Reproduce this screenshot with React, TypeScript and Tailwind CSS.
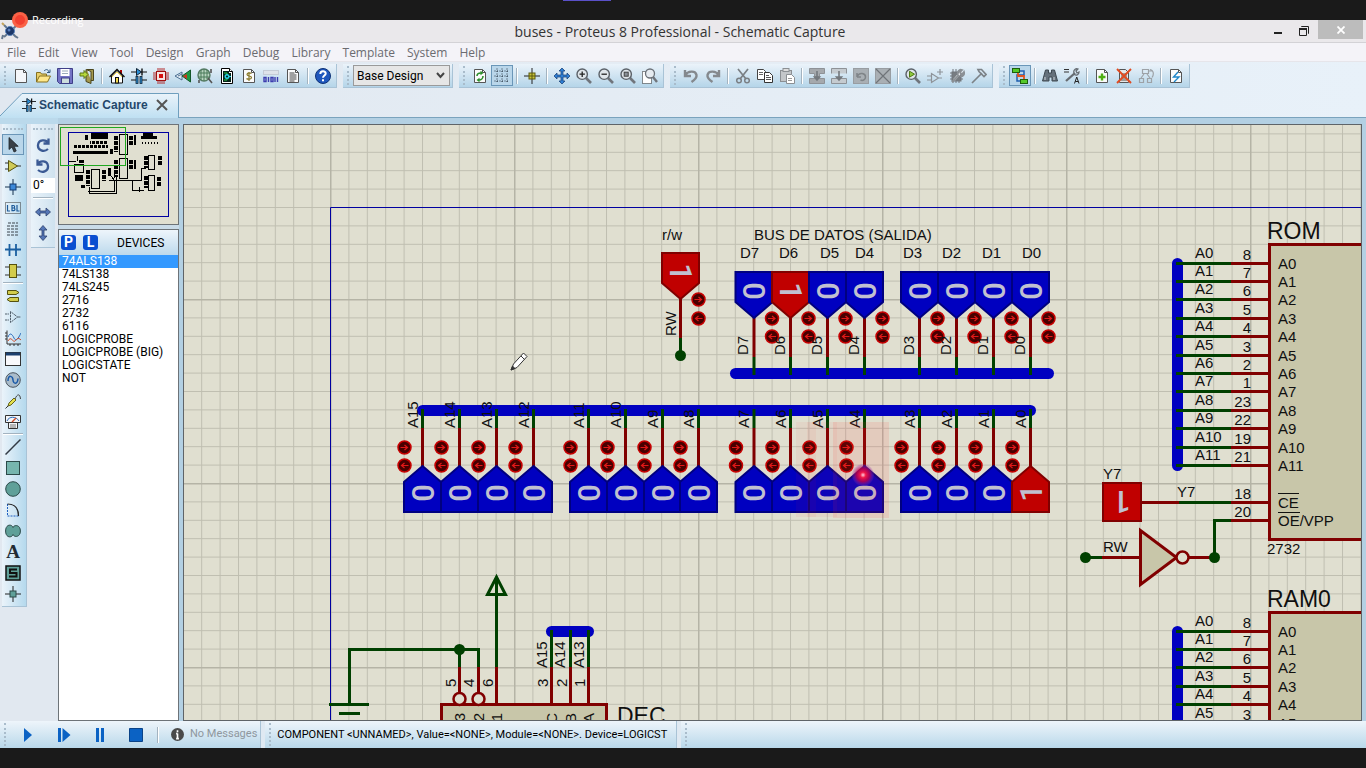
import React from "react";

type Kids = { children?: React.ReactNode };

const Ico = ({ children, s = 18 }: Kids & { s?: number }) => (
  <svg width={s} height={s} viewBox="0 0 16 16" fill="none" stroke="#333" strokeWidth="1" aria-hidden="true" className="shrink-0">
    {children}
  </svg>
);

const PAGE = "M3 1.5h7.5l3 3v10H2.500v-13z";
const page = (fill = "#fbfbfb") => (
  <>
    <path d={PAGE} fill={fill} stroke="#555" />
    <path d="M10.500 1.500v3h3" stroke="#555" />
  </>
);

const wrench = (c: string) => <path d="M3 14l7-7M9 7c-1-3 1-6 4-5l-2 2 1 2 2 0 1-2c1 3-2 5-4 4" stroke={c} strokeWidth="1.8" />;

const lens = (inner: React.ReactNode) => (
  <>
    <path d="M10 10l5 5" stroke="#70757c" strokeWidth="2.600" />
    <circle cx="6.200" cy="6.200" r="5.200" fill="#dfe5ea" stroke="#5b6168" strokeWidth="1.400" />
    {inner}
  </>
);

const block = (inner: React.ReactNode) => (
  <>
    <rect x="0.500" y="0.500" width="15" height="15" fill="#a9afb4" stroke="#989da2" />
    {inner}
  </>
);

const capture = (
  <>
    <path d="M0 4h16" stroke="#111" />
    <path d="M5.500 0.500v7l5-3.500z" fill="#2b8fd6" stroke="#123" />
    <path d="M11 0.500v7" stroke="#111" strokeWidth="1.400" />
    <path d="M0 12h5M11 12h5" stroke="#111" />
    <rect x="5" y="8.500" width="2" height="7" fill="#2b8fd6" stroke="#123" strokeWidth="0.800" />
    <rect x="9" y="8.500" width="2" height="7" fill="#2b8fd6" stroke="#123" strokeWidth="0.800" />
  </>
);

const icons: Record<string, React.ReactNode> = {
  "New Project": page("#f4f6f9"),
  "Open Project": (
    <>
      <path d="M1.500 14V4.500h4l1 1.500h5v2" fill="#e8cf69" stroke="#857020" />
      <path d="M1.500 14l3-6h11l-3 6z" fill="#ffe88a" stroke="#857020" />
      <path d="M9 3c2-2 4-2 5 1M15 1.500v3h-3" stroke="#345a80" />
    </>
  ),
  "Save Project": (
    <>
      <path d="M0.500 0.500h15v15h-13l-2-2z" fill="#7373c4" stroke="#3f3f88" />
      <rect x="3.500" y="1" width="9" height="7" fill="#fff" stroke="none" />
      <path d="M5 3h6M5 5.500h6" stroke="#9ab" />
      <rect x="4.500" y="10" width="8" height="5.500" fill="#cdd" stroke="#3f3f88" />
    </>
  ),
  "Close Project": (
    <>
      <path d="M8 1.500h6.500v11H12M7 1.500v12l5 2v-12z" fill="#a59a4e" stroke="#4b461e" />
      <path d="M1 5h4V2.500l4 4-4 4V8H1z" fill="#b6d83a" stroke="#5c7715" />
    </>
  ),
  Home: (
    <>
      <path d="M12 2v4" stroke="#a00" strokeWidth="2" />
      <path d="M2.500 15V8L8 2.500 13.500 8v7z" fill="#fff" stroke="#111" />
      <path d="M0.500 9L8 1.500 15.500 9" stroke="#111" strokeWidth="1.400" />
      <path d="M3 9l5-5 5 5" stroke="#f2d94c" />
      <rect x="6.500" y="9.500" width="3" height="5.500" fill="#f2d94c" stroke="#111" />
    </>
  ),
  "Schematic Capture": capture,
  "PCB Layout": (
    <>
      <path d="M5 0v16M7 0v16M9 0v16M11 0v16M0 5h16M0 7h16M0 9h16M0 11h16" stroke="#b01818" strokeWidth="0.900" />
      <rect x="3.500" y="3.500" width="9" height="9" fill="#f6e3e3" stroke="#a01010" />
      <rect x="6" y="6" width="4" height="4" fill="#d51010" stroke="none" />
    </>
  ),
  "3D Visualizer": (
    <>
      <path d="M0 8l7-4v8zM3 8l4-2" fill="#dfe9f2" stroke="#4b6f92" />
      <path d="M15.500 2v12L7 8z" fill="#1f9a42" stroke="#14582a" />
      <path d="M12 6v5l-4-3z" fill="#c32" stroke="none" />
    </>
  ),
  "Gerber Viewer": (
    <>
      <circle cx="7" cy="7" r="6" fill="#b9d4c0" stroke="#557a63" strokeWidth="1.400" />
      <path d="M2 5h10M2 9h10M7 1v12M4 2v10M10 2v9" stroke="#4b7a5a" />
      <path d="M11 10l4 5M14 1v4M2 12v3" stroke="#555" strokeWidth="1.600" />
    </>
  ),
  "Design Explorer": (
    <>
      <path d="M2.500 0.500h8l3 3v12h-11z" fill="#fff" stroke="#000" />
      <path d="M4 3h6v2h2v9H4z" fill="#06251c" stroke="none" />
      <path d="M10.500 0.500v3h3" fill="#fff" stroke="#000" />
      <path d="M5 5h3v2M5 12h3v-2" stroke="#2ad04a" />
      <circle cx="8" cy="8.500" r="1.800" stroke="#29d4e5" strokeWidth="1.400" />
      <path d="M10 8.500h2" stroke="#29d4e5" />
    </>
  ),
  "Bill of Materials": (
    <>
      {page()}
      <path d="M10.500 5.500c-1-1-4.500-1-4.500 1s4.500 1 4.500 3-4 2-5 1M8 4v9" stroke="#8a7a2a" strokeWidth="1.200" />
    </>
  ),
  "Source Code": (
    <>
      <rect x="0.500" y="2.500" width="15" height="4" fill="#dfe3ea" stroke="#c5cbd5" />
      <path d="M1 9.500h2v4H1zM5.500 9v5M8 9.500h2v4H8zM12 9v5M14.500 9v5" stroke="#3c3cae" strokeWidth="1.400" />
    </>
  ),
  "Project Notes": (
    <>
      {page()}
      <path d="M4.500 5h5M4.500 7h7M4.500 9h7M4.500 11h7M4.500 13h5" stroke="#444" />
    </>
  ),
  Help: (
    <>
      <circle cx="8" cy="8" r="7.500" fill="#1f57bd" stroke="#0e3276" />
      <path d="M5.300 6c0-3.500 5.400-3.500 5.400-.5 0 2-2.700 2-2.700 4.200M8 11.200v2" stroke="#fff" strokeWidth="2" />
    </>
  ),
  Redraw: (
    <>
      {page()}
      <path d="M5 8c0-2 1.500-3 4-3M11 8c0 2-1.500 4-4 4" stroke="#2c8f2c" strokeWidth="1.600" />
      <path d="M8.500 2.800v4.400l3-2.200zM7.500 9.800v4.400l-3-2.200z" fill="#2c8f2c" stroke="none" />
    </>
  ),
  "Toggle Grid": (
    <path d="M0.500 3h15M0.500 8h15M0.500 13h15M3 0.500v15M8 0.500v15M13 0.500v15" stroke="#243240" strokeDasharray="1 1.500" />
  ),
  "False Origin": (
    <>
      <path d="M0 8h16M8 0v16" stroke="#222" />
      <rect x="5" y="5" width="6" height="6" fill="#c9c438" stroke="#5d5a10" />
      <path d="M5 8h6M8 5v6" stroke="#5d5a10" />
    </>
  ),
  "Centre At Cursor": (
    <path d="M8 0l3 3H9v4h4V5l3 3-3 3V9H9v4h2l-3 3-3-3h2V9H3v2L0 8l3-3v2h4V3H5z" fill="#2f7fd4" stroke="#123a70" strokeWidth="0.700" />
  ),
  "Zoom In": lens(<path d="M3.500 6.200h5.400M6.200 3.500v5.400" stroke="#222" strokeWidth="1.300" />),
  "Zoom Out": lens(<path d="M3.500 6.200h5.400" stroke="#222" strokeWidth="1.300" />),
  "Zoom To View Entire Sheet": lens(<rect x="4.200" y="4.200" width="4" height="4" fill="#8a9097" stroke="#444" />),
  "Zoom To Area": (
    <>
      <rect x="0.500" y="3.500" width="9" height="12" fill="#fff" stroke="#222" strokeDasharray="1 1" />
      <path d="M11 9l4 5" stroke="#70757c" strokeWidth="2.400" />
      <circle cx="8" cy="5.500" r="4.500" fill="#e6ebf0" stroke="#6b7178" strokeWidth="1.300" />
    </>
  ),
  Undo: <path d="M2 2v6h6M2.500 7c2-4 10-5 11 0 .5 3-2 5-5 7" stroke="#84898e" strokeWidth="2.400" />,
  Redo: <path d="M14 2v6H8M13.500 7c-2-4-10-5-11 0-.5 3 2 5 5 7" stroke="#84898e" strokeWidth="2.400" />,
  Cut: (
    <>
      <path d="M3 1l8 10M13 1L5 11" stroke="#7a7f84" strokeWidth="1.700" />
      <circle cx="4" cy="12.500" r="2.300" stroke="#7a7f84" strokeWidth="1.500" />
      <circle cx="12" cy="12.500" r="2.300" stroke="#7a7f84" strokeWidth="1.500" />
    </>
  ),
  Copy: (
    <>
      <path d="M0.500 1.500h6l2 2v8h-8z" fill="#fff" stroke="#444" />
      <path d="M2 4.500h4M2 6.500h4" stroke="#666" />
      <path d="M7.500 4.500h5l3 3v7h-8z" fill="#fff" stroke="#333" />
      <path d="M9 7.500h3M9 9.500h5M9 11.500h5" stroke="#555" />
    </>
  ),
  Paste: (
    <>
      <rect x="1.500" y="2.500" width="11" height="11" fill="#c3c6c9" stroke="#8b8f93" />
      <rect x="4" y="0.500" width="6" height="3" fill="#ddd" stroke="#8b8f93" />
      <path d="M7.500 6.500h5l3 3v6h-8z" fill="#fff" stroke="#8b8f93" />
      <path d="M9 10.500h4M9 12.500h4" stroke="#999" />
    </>
  ),
  "Block Copy": (
    <>
      <path d="M0.500 0.500h15v5h-5v3h-5v-3h-5zM0.500 10.500h15v5H0.500z" fill="#a5a9ad" stroke="#8e9297" />
      <path d="M8 3v6M5.500 9l2.500 3 2.500-3z" fill="#74797e" stroke="#74797e" strokeWidth="1.600" />
    </>
  ),
  "Block Move": (
    <>
      <path d="M0.500 5.500v-5h15v5M0.500 10.500h15v5H0.500z" fill="#c5cbd0" stroke="#8e9297" />
      <path d="M8 3v6M5.500 9l2.500 3 2.500-3z" fill="#74797e" stroke="#74797e" strokeWidth="1.600" />
    </>
  ),
  "Block Rotate": block(<path d="M4 9h4M4 9V5M4.500 8c2-4 8-3 8 1 0 3-3 4-5 3" stroke="#7f8488" strokeWidth="1.500" />),
  "Block Delete": block(<path d="M1 1l14 14M15 1L1 15" stroke="#6f7479" strokeWidth="1.200" />),
  "Pick Parts": lens(<path d="M4.500 3.200v6l5-3z" fill="#8fc93c" stroke="#4e7a17" />),
  "Make Device": <path d="M4.500 5.500v9l7-4.500zM0 8h4.500M0 12h4.500M11.500 10H15M13 1v6M10 4h6" stroke="#8e9399" strokeWidth="1.200" />,
  "Packaging Tool": (
    <>
      <path d="M4 1v14M7 1v14M10 5v10M1 5h13M1 8h13M1 11h13" stroke="#72777c" />
      <rect x="3" y="4" width="9" height="9" fill="#777c81" stroke="#72777c" />
      <path d="M5 12l8-9" stroke="#e8ebee" strokeWidth="2.200" />
      {wrench("#8b9095")}
    </>
  ),
  Decompose: <path d="M1 15L9 7M7 1.500h3.500l4.500 5-2 2-5-5zM9 7l2-2" stroke="#7c8287" strokeWidth="1.700" />,
  "Wire Autorouter": (
    <>
      <path d="M8 3h4v4H5v6h4" stroke="#1f5fae" strokeWidth="1.500" />
      <path d="M6 5v3h6v3" stroke="#e0531f" strokeWidth="1.800" />
      <rect x="0.500" y="0.500" width="7" height="4" fill="#54c92a" stroke="#1e5e0d" />
      <rect x="8.500" y="11.500" width="7" height="4" fill="#54c92a" stroke="#1e5e0d" />
    </>
  ),
  "Search and Tag": (
    <>
      <path d="M3.500 2h3v3h3V2h3l3 11h-5.500V9h-3v4H0.500z" fill="#65717c" stroke="#3e4851" />
      <path d="M3 9v3M12 9v3" stroke="#cfd6dc" />
    </>
  ),
  "Property Assignment": (
    <>
      <path d="M0 1.500h5M0 4h5" stroke="#333" strokeWidth="1.200" />
      <path d="M2 13L11 5" stroke="#666c72" strokeWidth="2.300" />
      <path d="M10 5c-1-3 2-5 4-4l-2 2 1 2 2-1c0 3-3 4-5 2" stroke="#666c72" strokeWidth="1.300" />
      <path d="M10.500 15.500l2.250-6.500 2.250 6.500M11.300 13.500h3" stroke="#222" />
    </>
  ),
  "New Sheet": (
    <>
      {page()}
      <path d="M8 5.500v7M4.500 9h7" stroke="#4faf13" strokeWidth="2.400" />
    </>
  ),
  "Remove Sheet": (
    <>
      <path d="M3.500 1.500h6l3 3v10h-9z" fill="#e7e7e7" stroke="#555" />
      <path d="M5 6h6M5 8h6M5 10h6M5 12h6" stroke="#555" />
      <path d="M1 1l14 14M15 1L1 15" stroke="#e04a20" strokeWidth="1.900" />
    </>
  ),
  "Exit to Parent": (
    <path d="M4.500 1.500h6v4h-6zM1.500 10.500h4v4h-4zM9.500 10.500h4v4h-4zM6 6l-3 4M9 6l3 4M12 1.500c4 1 4 5 2 8M10.500 3h4" stroke="#9da2a7" strokeWidth="1.200" />
  ),
  "Electrical Rules Check": (
    <>
      {page()}
      <path d="M10 4L5.500 9H11l-5 5" stroke="#1d86c9" strokeWidth="1.400" />
    </>
  ),
  "Selection Mode": <path d="M4 0.500v12l3-2.500 2 5 2.200-1-2-4.700h4z" fill="#3a4148" stroke="#20262b" strokeWidth="0.800" />,
  "Component Mode": (
    <>
      <path d="M0 5h4M0 11h4M12 8h4" stroke="#333" />
      <path d="M3.500 2.500v11l9-5.500z" fill="#cfca57" stroke="#55520f" />
    </>
  ),
  "Junction Dot Mode": (
    <>
      <path d="M0 8h16M8 0v16" stroke="#17324f" />
      <rect x="5" y="5" width="6" height="6" fill="#3c88d8" stroke="#123a70" />
    </>
  ),
  "Wire Label Mode": (
    <>
      <rect x="0.500" y="2.500" width="15" height="11" stroke="#333" strokeDasharray="1 1" />
      <path d="M2.500 5v6H5M7 5.500h1.500c1.500 0 1.500 2.500 0 2.500H7h1.700c1.700 0 1.700 2.700 0 2.700H7zM12 5v6h2.500" stroke="#1c5a99" strokeWidth="1.200" />
    </>
  ),
  "Text Script Mode": <path d="M3 2h10M2 5h12M2 8h12M2 11h12M2 14h12" stroke="#3c444c" strokeDasharray="3 1" />,
  "Buses Mode": <path d="M0 7.500h16M4.500 2v5.500M4.500 7.500V14M11 2v5.500M11 7.500V14" stroke="#1b5fa0" strokeWidth="1.800" />,
  "Subcircuit Mode": (
    <>
      <path d="M0 4h16M0 12h16" stroke="#333" />
      <rect x="4.500" y="1.500" width="7" height="13" fill="#d2cc4c" stroke="#55520f" />
    </>
  ),
  "Terminals Mode": (
    <path d="M2.500 2.500h8.500l3 2-3 2H2.500zM13.500 9.500H5l-3 2 3 2h8.500z" fill="#d2cc4c" stroke="#55520f" />
  ),
  "Device Pins Mode": <path d="M5.500 2.500v11l7-5.500zM0 5h4M0 11h4M12.500 8H16" stroke="#52606d" strokeDasharray="2.500 0.600" />,
  "Graph Mode": (
    <>
      <path d="M2 0.500v13.500h14M0 3h2M0 6h2M0 9h2M5 14v2M9 14v2M13 14v2" stroke="#333" />
      <path d="M3 7c2-5 4-3 6 1s4 1 7-5" stroke="#2566b8" />
      <path d="M3 11c3-6 5 2 7 0s3-4 6-1" stroke="#cf4b28" />
    </>
  ),
  "Active Popup Mode": (
    <>
      <rect x="0.500" y="1.500" width="15" height="13" fill="#f8f8fb" stroke="#333" />
      <path d="M1 3h14" stroke="#1b3f6e" strokeWidth="3" />
    </>
  ),
  "Generator Mode": (
    <>
      <circle cx="8" cy="8" r="7.300" fill="#a9bccb" stroke="#4c555e" />
      <path d="M3 9c0-7 4.800-5 5-1s4.500 5 5-1.500" stroke="#1a5aa8" strokeWidth="1.500" />
    </>
  ),
  "Probe Mode": (
    <>
      <path d="M0.500 15.500l3-3" stroke="#333" />
      <path d="M3 13l1-3 5-5 2 2-5 5z" fill="#e4e04d" stroke="#66641b" />
      <path d="M10 6c2-5 5-6 5.500 0" stroke="#444" />
    </>
  ),
  "Instruments Mode": (
    <>
      <path d="M0.500 1.500h15v7H0.500zM3.500 8.500h9v6h-9z" fill="#f3f5f7" stroke="#333" />
      <path d="M2 7c2-5 9-5 12 0" stroke="#2566b8" />
      <path d="M7 8l4-4" stroke="#cf4b28" strokeWidth="1.400" />
      <path d="M5 11h6M5 13h6" stroke="#777" />
    </>
  ),
  "2D Line": <path d="M0.500 15.500l15-15" stroke="#333a44" strokeWidth="1.500" />,
  "2D Box": <rect x="1.500" y="1.500" width="13" height="13" fill="#76b5ae" stroke="#2c4a49" />,
  "2D Circle": <circle cx="8" cy="8" r="7.300" fill="#5fa099" stroke="#2c4a49" />,
  "2D Arc": (
    <>
      <path d="M2.500 2v12h12" stroke="#1f5fc0" strokeDasharray="2 1" />
      <path d="M2.500 2c8 0 11 5 11 12" stroke="#222" strokeWidth="1.200" />
    </>
  ),
  "2D Closed Path": (
    <path d="M8 4.500C7 1 .6 .8 .6 8S7 15 8 11.500c1 3 7.400 3 7.400-3.500S9 1.500 8 4.500z" fill="#5fa099" stroke="#2c4a49" />
  ),
  "2D Symbols": (
    <>
      <rect x="1" y="1" width="14" height="14" fill="#5fa099" stroke="#111" strokeWidth="1.500" />
      <path d="M12 4.500H5v3.500h6.500v3.500H4" stroke="#111" strokeWidth="2" />
    </>
  ),
  "2D Markers": (
    <>
      <path d="M0 8h16M8 0v16" stroke="#222" />
      <rect x="5" y="5" width="6" height="6" fill="#5fa099" stroke="#2c4a49" />
    </>
  ),
  "Rotate Clockwise": <path d="M13.500 1.500v5h-5M13 6C11 2 3.500 2.500 3 8s6 7.500 10 4" stroke="#3b5a94" strokeWidth="2.300" />,
  "Rotate Anti-Clockwise": <path d="M2.500 1.500v5h5M3 6c2-4 9.500-3.500 10 2s-6 7.500-10 4" stroke="#3b5a94" strokeWidth="2.300" />,
  "X-Mirror": <path d="M0.500 8L5 4v3h6V4l4.500 4L11 12V9H5v3z" fill="#5476b6" stroke="#2b3f6c" strokeWidth="0.800" />,
  "Y-Mirror": <path d="M8 0.500L4 5h3v6H4l4 4.500L12 11H9V5h3z" fill="#5476b6" stroke="#2b3f6c" strokeWidth="0.800" />,
};

const Grip = () => <span className="mx-1 my-0.5 w-0.5 self-stretch border-l-2 border-dotted border-[#a9bccb]" />;

const VSep = () => (
  <span className="flex w-2 justify-center">
    <span className="h-4 w-0.5 border-r border-white bg-[#a3b3c0]" />
  </span>
);

const Tool = ({ name, active = false }: { name: string; active?: boolean }) => (
  <button
    type="button"
    aria-label={name}
    className={
      active
        ? "flex h-[21px] w-[22px] items-center justify-center border border-[#6a96b8] bg-[#b9d6ea]"
        : "flex h-[21px] w-[22px] items-center justify-center border border-transparent"
    }
  >
    {name === "2D Text" ? (
      <span className="font-['Liberation_Serif',serif] text-[19px] leading-5 font-bold text-[#222b33]">A</span>
    ) : (
      <Ico s={16}>{icons[name]}</Ico>
    )}
  </button>
);

const Band = ({ children }: Kids) => (
  <div className="flex h-6 items-center border-r border-b border-[#a9c3d6] bg-gradient-to-b from-[#ebf3fa] to-[#b5d5e9] pr-0.5">
    <Grip />
    {children}
  </div>
);

const groups: { names: string[] }[] = [
  { names: ["New Project", "Open Project", "Save Project", "Close Project", "|", "Home", "Schematic Capture", "PCB Layout", "3D Visualizer", "Gerber Viewer", "Design Explorer", "Bill of Materials", "Source Code", "Project Notes", "|", "Help"] },
  { names: ["Redraw", "Toggle Grid", "|", "False Origin", "|", "Centre At Cursor", "Zoom In", "Zoom Out", "Zoom To View Entire Sheet", "Zoom To Area"] },
  { names: ["Undo", "Redo", "|", "Cut", "Copy", "Paste", "|", "Block Copy", "Block Move", "Block Rotate", "Block Delete", "|", "Pick Parts", "Make Device", "Packaging Tool", "Decompose"] },
  { names: ["Wire Autorouter", "|", "Search and Tag", "Property Assignment", "|", "New Sheet", "Remove Sheet", "Exit to Parent", "|", "Electrical Rules Check"] },
];
const pressed = ["Toggle Grid", "Wire Autorouter", "Selection Mode"];

const ToolGroup = ({ names }: { names: string[] }) => (
  <Band>
    {names.map((n, i) => (n === "|" ? <VSep key={i} /> : <Tool key={i} name={n} active={pressed.includes(n)} />))}
  </Band>
);

const modes = [
  "Selection Mode", "Component Mode", "Junction Dot Mode", "Wire Label Mode", "Text Script Mode", "Buses Mode", "Subcircuit Mode", "|",
  "Terminals Mode", "Device Pins Mode", "Graph Mode", "Active Popup Mode", "Generator Mode", "Probe Mode", "Instruments Mode", "|",
  "2D Line", "2D Box", "2D Circle", "2D Arc", "2D Closed Path", "2D Text", "2D Symbols", "2D Markers",
];

const menus = ["File", "Edit", "View", "Tool", "Design", "Graph", "Debug", "Library", "Template", "System", "Help"];
const devices = ["74ALS138", "74LS138", "74LS245", "2716", "2732", "6116", "LOGICPROBE", "LOGICPROBE (BIG)", "LOGICSTATE", "NOT"];

const RED = "#800000";
const GREEN = "#004000";
const BLUE = "#0000c0";

const Line = ({ d, c, w = 3 }: { d: string; c: string; w?: number }) => <path d={d} stroke={c} strokeWidth={w} fill="none" />;

const T = ({ x, y, children, rot = false, end = false, size = 15 }: Kids & { x: number; y: number; rot?: boolean; end?: boolean; size?: number }) => (
  <text x={x} y={y} fontSize={size} textAnchor={end ? "end" : "start"} transform={rot ? `rotate(-90 ${x} ${y})` : undefined}>
    {children}
  </text>
);

const Digit = ({ x, y, v, rot }: { x: number; y: number; v: number; rot: number }) => (
  <text x={0} y={11} fontSize={31} fontFamily="Roboto, sans-serif" fontWeight={500} textAnchor="middle" fill="#c0c0d0" transform={`translate(${x} ${y}) rotate(${rot})`}>
    {v}
  </text>
);

const Toggle = ({ x, y, left = false }: { x: number; y: number; left?: boolean }) => (
  <g>
    <circle cx={x} cy={y} r={6.5} fill="#480000" stroke="#c80000" strokeWidth={1.5} />
    <path d={left ? `M${x + 4} ${y}h-7m3-2.500l-3 2.500 3 2.500` : `M${x - 4} ${y}h7m-3-2.500l3 2.500-3 2.500`} stroke="#e01818" strokeWidth={1.2} fill="none" />
  </g>
);

const Flag = ({ x, tip, down, v }: { x: number; tip: number; down: boolean; v: number }) => {
  const s = down ? -1 : 1;
  return (
    <g>
      <path
        d={`M${x} ${tip}l18.500 ${s * 16}v${s * 30}h-37v${s * -30}z`}
        fill={v ? "#c00000" : BLUE}
        stroke={v ? RED : "#000080"}
        strokeWidth={2}
      />
      <Digit x={x} y={tip + s * 27} v={v} rot={down ? 90 : -90} />
    </g>
  );
};

const dataX = [754, 790.5, 827.5, 864.5, 919.5, 956.5, 993.5, 1030.5];
const dataLabelX = [740, 779, 820, 855, 903, 942, 982, 1022];
const addrX = [422.5, 459.5, 496.5, 533.5, 588.5, 625.5, 662.5, 698.5, ...dataX];
const pinY = [263.5, 281.5, 299.5, 318.5, 336.5, 355.5, 373.5, 391.5, 410.5, 428.5, 447.5, 465.5];
const pinNo = [8, 7, 6, 5, 4, 3, 2, 1, 23, 22, 19, 21];

const Memory = ({ dy, name, part }: { dy: number; name: string; part?: string }) => (
  <g transform={`translate(0 ${dy})`}>
    <rect x={1269.5} y={244.5} width={200} height={295} fill="#c8c6a9" stroke={RED} strokeWidth={3} />
    <T x={1267} y={239} size={23}>{name}</T>
    <path d="M1177.500 263.500V465.500" stroke={BLUE} strokeWidth={11} strokeLinecap="round" />
    {pinY.map((y, i) => (
      <g key={i}>
        <Line d={`M1176 ${y}H1231`} c={GREEN} />
        <Line d={`M1231 ${y}H1269`} c={RED} />
        <T x={1195} y={y - 6}>{`A${i}`}</T>
        <T x={1251} y={y - 4} end>{pinNo[i]}</T>
        <T x={1278} y={y + 5}>{`A${i}`}</T>
      </g>
    ))}
    {part && <T x={1267} y={554}>{part}</T>}
  </g>
);

const Schematic = () => (
  <svg width="100%" height="100%" className="block" fontFamily="'Liberation Sans', Arial, sans-serif" fill="#101010" role="img" aria-label="Schematic sheet">
    <defs>
      <pattern id="minor" width="18.400" height="18.400" patternUnits="userSpaceOnUse" patternTransform="translate(330 115)">
        <path d="M0.500 0V18.400M0 0.500H18.400" stroke="#bfbeb0" strokeWidth="1" />
      </pattern>
      <pattern id="major" width="184" height="184" patternUnits="userSpaceOnUse" patternTransform="translate(330 115)">
        <path d="M0.500 0V184M0 0.500H184" stroke="#b5b4a6" strokeWidth="2" />
      </pattern>
      <radialGradient id="pointer">
        <stop offset="0" stopColor="#ffd0e0" />
        <stop offset="0.250" stopColor="#f01848" />
        <stop offset="0.600" stopColor="#d00040" stopOpacity="0.750" />
        <stop offset="1" stopColor="#8030c0" stopOpacity="0.150" />
      </radialGradient>
    </defs>
    <g transform="translate(-184 -125)">
      <rect x="184" y="125" width="4000" height="3000" fill="url(#minor)" />
      <rect x="184" y="125" width="4000" height="3000" fill="url(#major)" />
      <path d="M330.500 4000V207.500H4000" stroke="#0000a0" fill="none" />

      <T x={662} y={240}>r/w</T>
      <Line d="M680.500 298V338" c={RED} />
      <Line d="M680.500 338V356" c={GREEN} />
      <circle cx={680.5} cy={355.5} r={5.5} fill={GREEN} />
      <Flag x={680.5} tip={299} down v={1} />
      <Toggle x={698.5} y={299.5} />
      <Toggle x={698.5} y={318.5} left />
      <T x={676} y={336} rot>RW</T>

      <T x={754} y={240}>BUS DE DATOS (SALIDA)</T>
      <path d="M735.500 373.500H1048.500" stroke={BLUE} strokeWidth={11} strokeLinecap="round" />
      {dataX.map((x, i) => (
        <g key={i}>
          <T x={dataLabelX[i]} y={258}>{`D${7 - i}`}</T>
          <Line d={`M${x} 317V357`} c={RED} />
          <Line d={`M${x} 357V375`} c={GREEN} />
          <Flag x={x} tip={318} down v={i === 1 ? 1 : 0} />
        </g>
      ))}
      {dataX.map((x, i) => (
        <g key={i}>
          <T x={x - 6} y={355} rot>{`D${7 - i}`}</T>
          <Toggle x={x + 18} y={318.5} />
          <Toggle x={x + 18} y={336.5} left />
        </g>
      ))}

      <path d="M422.500 410.500H1030.500" stroke={BLUE} strokeWidth={11} strokeLinecap="round" />
      {addrX.map((x, i) => (
        <g key={i}>
          <Line d={`M${x} 409V428`} c={GREEN} />
          <Line d={`M${x} 428V467`} c={RED} />
          <Toggle x={x - 18} y={447.5} />
          <Toggle x={x - 18} y={465.5} left />
          <Flag x={x} tip={466} down={false} v={i === 15 ? 1 : 0} />
          <T x={x - 5} y={428} rot>{`A${15 - i}`}</T>
        </g>
      ))}
      <rect x={796} y={422} width={20} height={95} fill="#ff3030" opacity={0.05} />
      <rect x={807} y={422} width={30} height={95} fill="#ff3030" opacity={0.05} />
      <rect x={833.5} y={422.5} width={55} height={95} fill="#ff3030" stroke="#ff3030" opacity={0.11} />
      <circle cx={863} cy={475} r={11} fill="url(#pointer)" />

      <Memory dy={0} name="ROM" part="2732" />
      <T x={1278} y={508}>CE</T>
      <T x={1278} y={526}>OE/VPP</T>
      <Line d="M1278 493.500H1299M1278 512.500H1300" c="#101010" w={1} />
      <T x={1103} y={479}>Y7</T>
      <rect x={1103} y={483} width={38} height={38} fill="#c00000" stroke={RED} strokeWidth={2} />
      <Digit x={1122} y={502} v={1} rot={180} />
      <Line d="M1142 502.500H1179M1231 502.500H1269M1231 520.500H1269" c={RED} />
      <Line d="M1179 502.500H1231M1231 520.500H1214.500V557.500" c={GREEN} />
      <T x={1177} y={497}>Y7</T>
      <T x={1251} y={499} end>18</T>
      <T x={1251} y={517} end>20</T>
      <T x={1103} y={552}>RW</T>
      <Line d="M1085 557.500H1102" c={GREEN} />
      <Line d="M1102 557.500H1141M1189 557.500H1210" c={RED} />
      <circle cx={1085.5} cy={557.5} r={5.5} fill={GREEN} />
      <circle cx={1214.5} cy={557.5} r={5.5} fill={GREEN} />
      <path d="M1140.500 530.500V584.500L1176.500 557.500Z" fill="#c8c6a9" stroke={RED} strokeWidth={3} />
      <circle cx={1182.5} cy={557.5} r={6} fill="#e0dfd0" stroke={RED} strokeWidth={2.5} />

      <Memory dy={368} name="RAM0" />

      <rect x={441.5} y={704.5} width={165} height={300} fill="#c8c6a9" stroke={RED} strokeWidth={3} />
      <Line d="M349.500 704V649.500H478.500V667M459.500 649.500V667M329 704.500H369M339 713.500H360" c={GREEN} />
      <Line d="M496.500 578V667M487.500 594.500L496.500 577L505.500 594.500Z" c={GREEN} />
      <circle cx={459.5} cy={649.5} r={5.5} fill={GREEN} />
      <Line d="M459.500 667V693M478.500 667V693M496.500 667V704" c={RED} />
      <circle cx={459.5} cy={699} r={6} fill="#e0dfd0" stroke={RED} strokeWidth={2.5} />
      <circle cx={478.5} cy={699} r={6} fill="#e0dfd0" stroke={RED} strokeWidth={2.5} />
      <path d="M551.500 631.500H588.500" stroke={BLUE} strokeWidth={11} strokeLinecap="round" />
      <Line d="M551.500 630V667M570.500 630V667M588.500 630V667" c={GREEN} />
      <Line d="M551.500 667V704M570.500 667V704M588.500 667V704" c={RED} />
      <T x={547} y={668} rot>A15</T>
      <T x={565} y={668} rot>A14</T>
      <T x={584} y={668} rot>A13</T>
      <T x={456} y={687} rot>5</T>
      <T x={474} y={687} rot>4</T>
      <T x={493} y={687} rot>6</T>
      <T x={548} y={687} rot>3</T>
      <T x={567} y={687} rot>2</T>
      <T x={585} y={687} rot>1</T>
      <T x={465} y={713} rot end>3</T>
      <T x={484} y={713} rot end>2</T>
      <T x={502} y={713} rot end>1</T>
      <T x={557} y={713} rot end>C</T>
      <T x={576} y={713} rot end>B</T>
      <T x={594} y={713} rot end>A</T>
      <T x={617} y={724} size={23}>DEC</T>

      <path d="M511 370l2.500-6 10-11 3.500 3.500-10 11z" fill="#fff" stroke="#333" />
      <path d="M511 370l4-1.500-2.500-2.500zM521 356l3.500 3.500" fill="#333" stroke="#333" />
    </g>
  </svg>
);

const Overview = () => (
  <svg viewBox="59 125 119 99" className="block w-full" fill="none" stroke="#000" shapeRendering="crispEdges" role="img" aria-label="Sheet overview">
    <rect x="68.500" y="132.500" width="100" height="84" stroke="#0000a0" />
    <path d="M91 134.500H108M91 137.500H108M86 135V140M90 142.500H108M73 146.500H108M73 152H108M141 137H157M143 134.500H153" strokeWidth="3" />
    <path d="M73 146.500H108M91 142.500H108" stroke="#e0dfd0" strokeDasharray="1 3" strokeWidth="3" />
    <path d="M142 143H158" strokeWidth="2" strokeDasharray="1 2" />
    <rect x="119.500" y="134.500" width="8" height="20" />
    <rect x="119.500" y="158.500" width="8" height="20" />
    <rect x="91.500" y="169.500" width="8" height="19" />
    <rect x="148.500" y="155.500" width="6" height="14" />
    <rect x="148.500" y="175.500" width="6" height="15" />
    <rect x="74.500" y="164.500" width="9" height="8" />
    <path d="M116 136V152M116 160V177M131 136V146M131 160V170M87.500 170V186M104 170V181M145.500 156V168M159.500 156V165M145.500 176V188M158.500 177V186" strokeWidth="4" strokeDasharray="4 1" />
    <path d="M134.500 135V145M134.500 160V169" strokeWidth="2" />
    <path d="M75 177.500H83" strokeWidth="6" />
    <path d="M81 186H85M79 161H84M111 149V154M109 168V176" strokeWidth="3" />
    <path d="M69 161.500H76M77 156V161M89 187V193.500H116.500V177M88 191H114V180M109 180.500H141V168.500H146M132.500 181V190H144M139 187V192M114 178V173M111 176L115 181" />
    <rect x="60.500" y="127.500" width="65" height="38" stroke="#20a820" />
  </svg>
);

export default function App() {
  return (
    <div className="relative flex h-screen flex-col overflow-hidden bg-[#1a1a1a] font-['Roboto','Liberation_Sans',sans-serif] text-xs text-black">
      <div className="flex h-5 shrink-0 justify-center pr-48">
        <span className="h-px w-12 bg-[#5a50c8]" />
      </div>

      <header className="flex h-[23px] shrink-0 items-center border-b border-[#d3d2d6] bg-[#eae8eb] pr-[3px]">
        <svg width="20" height="20" viewBox="0 0 20 20" fill="none" className="shrink-0" aria-hidden="true">
          <path d="M4 4l12 12M16 5L4 16M3 14l-1 4M15 15l3 2" stroke="#66788e" strokeWidth="2" />
          <circle cx="10" cy="10" r="4.500" fill="#1d3768" stroke="#5b83bd" />
          <circle cx="9" cy="9" r="1.500" fill="#577dbb" />
          <path d="M2 2l2 2M17 2l-2 2" stroke="#c4a35a" strokeWidth="2" />
        </svg>
        <h1 className="min-w-0 flex-1 pt-px pl-[74px] text-center font-['Open_Sans',sans-serif] text-sm font-normal text-[#333]">
          buses - Proteus 8 Professional - Schematic Capture
        </h1>
        <button type="button" aria-label="Minimize" className="flex h-full w-6 items-center justify-center">
          <svg width="10" height="10" viewBox="0 0 10 10"><path d="M1 7h8" stroke="#222" strokeWidth="2" /></svg>
        </button>
        <button type="button" aria-label="Restore" className="flex h-full w-7 items-center justify-center">
          <svg width="10" height="10" viewBox="0 0 10 10" fill="none" stroke="#222"><path d="M2.500 1V0.500h7v7H9" /><path d="M0.500 3h7v6.500h-7z" /><path d="M0 3h8" strokeWidth="2" /></svg>
        </button>
        <button type="button" aria-label="Close" className="flex h-[19px] w-[45px] items-center justify-center self-start bg-[#bcbcbc]">
          <svg width="8" height="8" viewBox="0 0 8 8"><path d="M0.500 0.500l7 7M7.500 0.500l-7 7" stroke="#fff" strokeWidth="1.800" /></svg>
        </button>
      </header>

      <nav className="flex h-[19px] shrink-0 items-center gap-3 border-b border-[#e6e5ea] bg-[#f4f3f8] pt-0.5 pl-[7px] font-['Open_Sans',sans-serif] text-[#6b6b70]">
        {menus.map((m) => (
          <button type="button" key={m}>{m}</button>
        ))}
      </nav>

      <div className="flex h-[30px] shrink-0 items-start gap-1.5 bg-gradient-to-r from-[#e1e8f0] to-[#e8f1f9] pt-0.5">
        <ToolGroup names={groups[0].names} />
        <Band>
          <select aria-label="Design variant" className="h-[21px] w-[97px] appearance-none border border-[#9a9a9a] bg-[#e6e6e6] bg-[url('data:image/svg+xml,%3Csvg%20xmlns=%22http://www.w3.org/2000/svg%22%20width=%229%22%20height=%227%22%3E%3Cpath%20d=%22M1%201l3.5%204L8%201%22%20fill=%22none%22%20stroke=%22%23444%22%20stroke-width=%222%22/%3E%3C/svg%3E')] bg-[position:right_4px_center] bg-no-repeat pl-[3px] text-xs">
            <option>Base Design</option>
          </select>
        </Band>
        {groups.slice(1).map((g, i) => (
          <ToolGroup key={i} names={g.names} />
        ))}
      </div>

      <div className="flex h-[26px] shrink-0 items-stretch bg-gradient-to-r from-[#e1e8f0] to-[#e8f1f9]">
        <div className="relative flex w-[179px] items-center pl-[22px]">
          <svg className="absolute inset-0 h-full w-full" viewBox="0 0 179 26" preserveAspectRatio="none" aria-hidden="true">
            <defs>
              <linearGradient id="tab" x2="0" y2="1">
                <stop offset="0" stopColor="#eaf3fa" />
                <stop offset="1" stopColor="#bfe0f2" />
              </linearGradient>
            </defs>
            <path d="M0 24L22 1.500H178.500V26H0Z" fill="url(#tab)" />
            <path d="M0 24L22 1.500H178.500V26" fill="none" stroke="#6f9fbe" />
          </svg>
          <div className="relative flex items-center">
            <Ico s={14}>{capture}</Ico>
            <span className="pl-[3px] font-['Liberation_Sans',sans-serif] text-xs font-bold text-[#24476b]">Schematic Capture</span>
            <button type="button" aria-label="Close tab" className="pl-2">
              <svg width="12" height="12" viewBox="0 0 12 12"><path d="M1 1l10 10M11 1L1 11" stroke="#555" strokeWidth="2" /></svg>
            </button>
          </div>
        </div>
        <div className="flex-1 border-b border-[#7aa3bd]" />
      </div>

      <main className="flex min-h-0 flex-1 bg-[#b3d0e3] pr-1">
        <div className="flex w-[58px] shrink-0 items-start gap-1 border-t-[6px] border-[#bbd9eb] bg-[#e1e8f0] pl-0.5">
          <div className="flex flex-col items-center border-r border-b border-[#a9c3d6] bg-gradient-to-r from-[#eaf3fa] to-[#b5d9ed] pr-0.5 pb-0.5">
            <span className="mt-1 mb-1 w-5 border-t-2 border-dotted border-[#a9bccb]" />
            {modes.map((m, i) =>
              m === "|" ? (
                <span key={i} className="my-px h-0.5 w-5 border-b border-white bg-[#a3b3c0]" />
              ) : (
                <Tool key={i} name={m} active={pressed.includes(m)} />
              )
            )}
          </div>
          <div className="flex flex-col items-center border-b border-[#a9c3d6] bg-gradient-to-r from-[#eaf3fa] to-[#cfe2ef] pb-1">
            <span className="mt-1 mb-1 w-5 border-t-2 border-dotted border-[#a9bccb]" />
            <Tool name="Rotate Clockwise" />
            <Tool name="Rotate Anti-Clockwise" />
            <input aria-label="Rotation angle" defaultValue="0°" className="mt-0.5 h-[15px] w-[24px] bg-white pl-0.5 text-xs leading-[15px] outline-none" />
            <span className="mt-1 mb-0.5 h-0.5 w-5 border-b border-white bg-[#a3b3c0]" />
            <Tool name="X-Mirror" />
            <Tool name="Y-Mirror" />
          </div>
        </div>

        <aside className="mt-1.5 flex w-[121px] shrink-0 flex-col gap-1 bg-[#c9dbe8]">
          <div className="border border-[#6d7378] bg-[#e0dfd0]">
            <Overview />
          </div>
          <section className="flex min-h-0 flex-1 flex-col border border-[#6d7378] bg-white">
            <div className="flex h-[25px] shrink-0 items-center gap-[7px] bg-gradient-to-b from-[#eef5fb] to-[#bcd9ec] pl-0.5">
              <button type="button" className="h-[15px] w-[15px] rounded-[3px] bg-[#0a4ed0] text-sm leading-[15px] font-bold text-white">P</button>
              <button type="button" className="h-[15px] w-[15px] rounded-[3px] bg-[#0a4ed0] text-sm leading-[15px] font-bold text-white">L</button>
              <h2 className="pl-3 text-xs font-normal">DEVICES</h2>
            </div>
            <ul>
              {devices.map((d, i) => (
                <li key={d} className={i === 0 ? "bg-[#3399ff] pl-[3px] leading-[13px] text-white" : "pl-[3px] leading-[13px]"}>
                  {d}
                </li>
              ))}
            </ul>
          </section>
        </aside>

        <div className="mt-1.5 ml-1 min-w-0 flex-1 border border-[#5f6468] bg-[#e0dfd0]">
          <Schematic />
        </div>
      </main>

      <footer className="flex h-[27px] shrink-0 items-stretch gap-1 bg-[#dfe9f2] text-[11px]">
        <div className="flex items-center border-r border-[#a9c3d6] bg-gradient-to-b from-[#eef5fb] to-[#b9d8ea] pr-[3px]">
          <Grip />
          <button type="button" aria-label="Run" className="flex w-9 justify-center">
            <svg width="10" height="14" viewBox="0 0 10 14"><path d="M1 0l8 7-8 7z" fill="#0b62c4" /></svg>
          </button>
          <button type="button" aria-label="Step" className="flex w-9 justify-center">
            <svg width="14" height="14" viewBox="0 0 14 14"><path d="M1 0h3v14H1zM5.500 0l8 7-8 7z" fill="#0b62c4" /></svg>
          </button>
          <button type="button" aria-label="Pause" className="flex w-9 justify-center">
            <svg width="8" height="14" viewBox="0 0 8 14"><path d="M0 0h3v14H0zM5 0h3v14H5z" fill="#0b62c4" /></svg>
          </button>
          <button type="button" aria-label="Stop" className="flex w-9 justify-center">
            <svg width="14" height="14" viewBox="0 0 14 14"><path d="M0.500 0.500h13v13H0.500z" fill="#0b62c4" stroke="#0a4388" /></svg>
          </button>
          <VSep />
          <svg width="13" height="13" viewBox="0 0 14 14" className="ml-[9px]" aria-hidden="true"><circle cx="7" cy="7" r="7" fill="#4a4a4a" /><path d="M7 2.500v2M7 6v5.500M5.500 11.500h3M5.500 6H7" stroke="#fff" strokeWidth="1.800" /></svg>
          <span className="pl-1.5 whitespace-nowrap text-[#8f979e]">No Messages</span>
        </div>
        <div className="flex w-[412px] items-center overflow-hidden border-r border-[#a9c3d6] bg-gradient-to-b from-[#eef5fb] to-[#b9d8ea]">
          <Grip />
          <p className="min-w-0 flex-1 overflow-hidden pt-px pl-0.5 whitespace-nowrap">
            COMPONENT &lt;UNNAMED&gt;, Value=&lt;NONE&gt;, Module=&lt;NONE&gt;. Device=LOGICST
          </p>
        </div>
        <div className="flex flex-1 items-stretch bg-gradient-to-b from-[#eef5fb] to-[#b9d8ea]">
          <Grip />
        </div>
      </footer>
      <div className="h-5 shrink-0" />

      <div className="absolute top-3 left-3 flex items-center gap-1">
        <span className="h-4 w-4 rounded-full border-[3px] border-[#ff7a55]/60 bg-[#f24030]" />
        <span className="font-['Open_Sans',sans-serif] text-[11px] leading-4 text-white">Recording</span>
      </div>
    </div>
  );
}
